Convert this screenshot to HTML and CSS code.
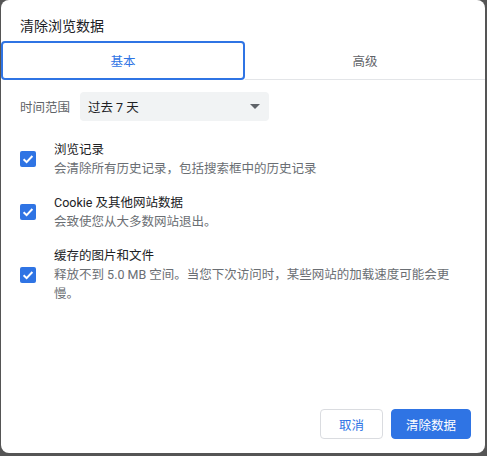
FILE: index.html
```html
<!DOCTYPE html>
<html lang="zh-CN">
<head>
<meta charset="utf-8">
<title>清除浏览数据</title>
<link rel="stylesheet" href="styles.css">
</head>
<body>
<div class="dialog">
  <div class="title">清除浏览数据</div>
  <div class="tabs">
    <div class="tab active">基本</div>
    <div class="tab">高级</div>
  </div>
  <div class="range">
    <span class="range-label">时间范围</span>
    <div class="select">
      <span>过去 7 天</span>
      <span class="arrow"></span>
    </div>
  </div>
  <div class="items">
    <div class="item">
      <span class="check"><svg viewBox="0 0 16 16" width="16" height="16"><path d="M3.6 8.2 L6.6 11.1 L12.4 5" fill="none" stroke="#fff" stroke-width="2"/></svg></span>
      <div class="item-text">
        <div class="item-title">浏览记录</div>
        <div class="item-desc">会清除所有历史记录，包括搜索框中的历史记录</div>
      </div>
    </div>
    <div class="item">
      <span class="check"><svg viewBox="0 0 16 16" width="16" height="16"><path d="M3.6 8.2 L6.6 11.1 L12.4 5" fill="none" stroke="#fff" stroke-width="2"/></svg></span>
      <div class="item-text">
        <div class="item-title">Cookie 及其他网站数据</div>
        <div class="item-desc">会致使您从大多数网站退出。</div>
      </div>
    </div>
    <div class="item">
      <span class="check"><svg viewBox="0 0 16 16" width="16" height="16"><path d="M3.6 8.2 L6.6 11.1 L12.4 5" fill="none" stroke="#fff" stroke-width="2"/></svg></span>
      <div class="item-text">
        <div class="item-title">缓存的图片和文件</div>
        <div class="item-desc">释放不到 5.0 MB 空间。当您下次访问时，某些网站的加载速度可能会更慢。</div>
      </div>
    </div>
  </div>
  <div class="footer">
    <button class="btn cancel">取消</button>
    <button class="btn primary">清除数据</button>
  </div>
</div>
</body>
</html>
```

FILE: styles.css
```css
html, body {
  margin: 0;
  padding: 0;
  background: #555555;
}
body {
  font-family: Roboto, "Noto Sans CJK SC", sans-serif;
  font-size: 12.5px;
  color: #202124;
  width: 487px;
  height: 456px;
  overflow: hidden;
}
.dialog {
  box-sizing: border-box;
  margin: 0 2px 0 1px;
  height: 453px;
  background: #fff;
  border-radius: 8px;
  display: flex;
  flex-direction: column;
  padding-top: 16px;
}
.title {
  font-size: 14px;
  line-height: 20px;
  padding-left: 19px;
  color: #202124;
}
.tabs {
  display: flex;
  margin-top: 5px;
  height: 39px;
}
.tab {
  flex: 1;
  box-sizing: border-box;
  display: flex;
  align-items: center;
  justify-content: center;
  color: #5f6368;
  font-size: 12.5px;
  border-bottom: 1px solid #e3e5e8;
}
.tab.active {
  color: #2f74e4;
  border: 2px solid #2f74e4;
  border-radius: 4px;
}
.range {
  display: flex;
  align-items: center;
  margin-top: 12px;
  padding-left: 19px;
}
.range-label {
  color: #5f6368;
  width: 60px;
}
.select {
  box-sizing: border-box;
  width: 189px;
  height: 29px;
  background: #f1f3f4;
  border-radius: 4px;
  display: flex;
  align-items: center;
  justify-content: space-between;
  padding: 0 8px 0 8px;
  color: #202124;
}
.arrow {
  width: 0;
  height: 0;
  border-left: 5px solid transparent;
  border-right: 5px solid transparent;
  border-top: 5px solid #5f6368;
  margin-right: 1px;
}
.items {
  display: flex;
  flex-direction: column;
  gap: 15px;
  margin-top: 19px;
  padding-left: 19px;
  padding-right: 30px;
}
.item {
  display: flex;
  align-items: center;
}
.check {
  flex: none;
  width: 16px;
  height: 16px;
  border-radius: 2px;
  background: #2f74e4;
  display: flex;
  margin-right: 18px;
}
.item-text {
  line-height: 19px;
  flex: 1;
}
.item-title {
  color: #202124;
}
.item-desc {
  color: #6a6e73;
}
.footer {
  margin-top: auto;
  display: flex;
  justify-content: flex-end;
  gap: 8px;
  padding: 0 14px 14px 0;
}
.btn {
  box-sizing: border-box;
  height: 30px;
  border-radius: 4px;
  font-family: Roboto, "Noto Sans CJK SC", sans-serif;
  font-size: 12.5px;
  padding: 0;
  cursor: pointer;
}
.cancel {
  width: 63px;
  background: #fff;
  border: 1px solid #dadce0;
  color: #2f74e4;
}
.primary {
  width: 80px;
  background: #2f74e4;
  border: 1px solid #2f74e4;
  color: #fff;
}
```
